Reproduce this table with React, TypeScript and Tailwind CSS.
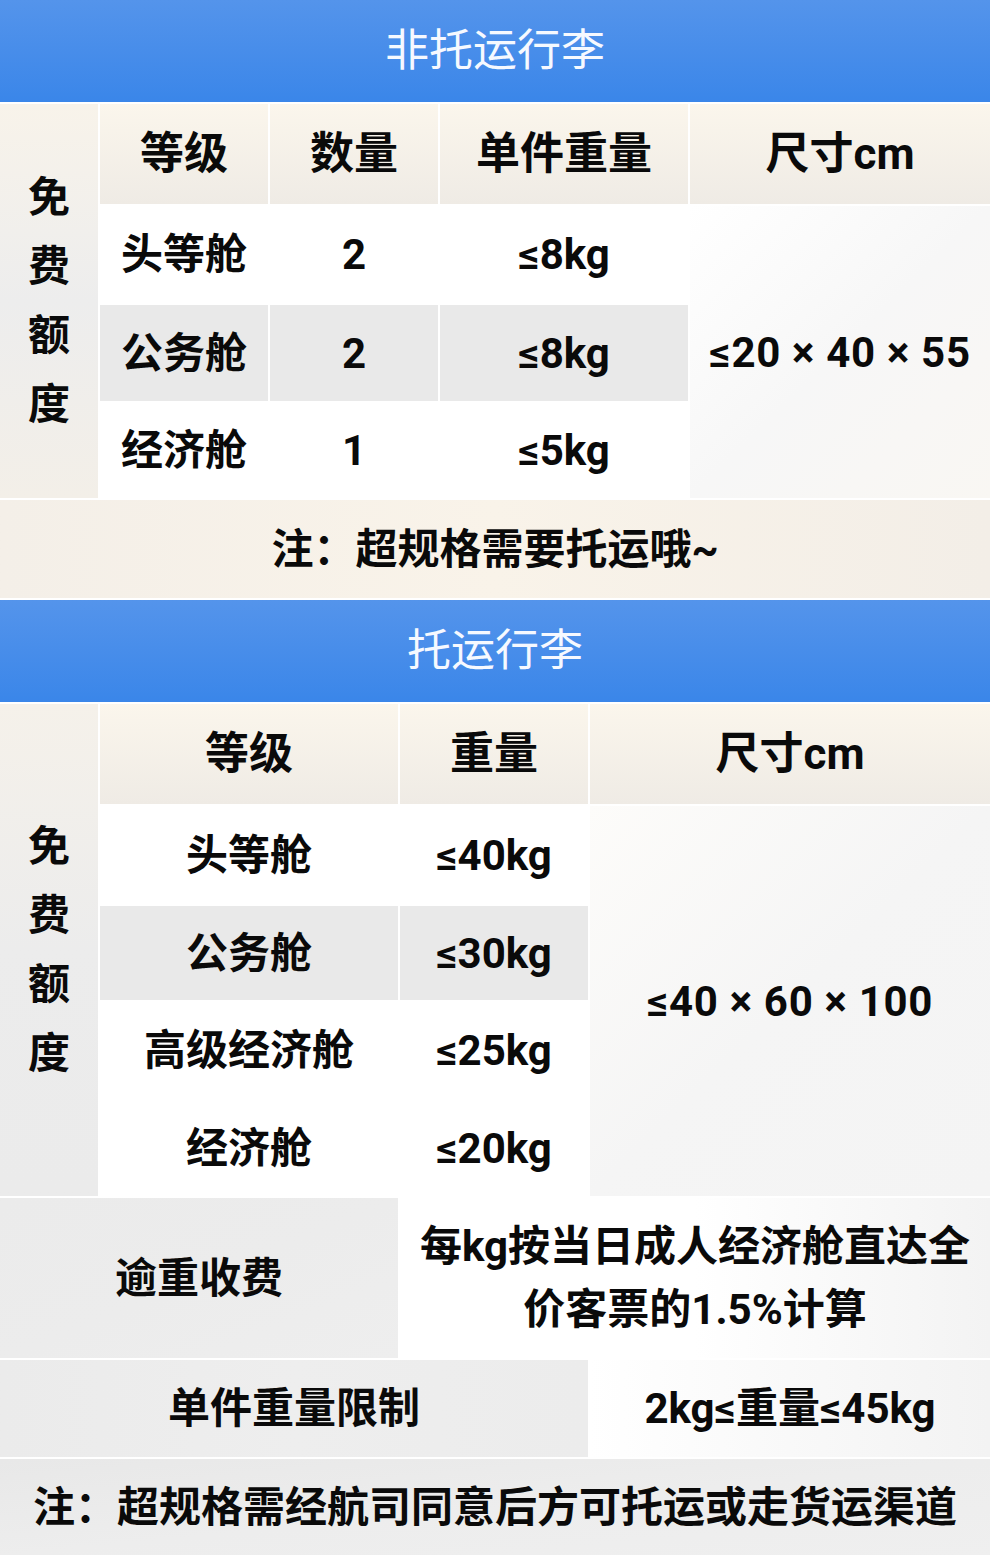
import React from "react";

const FONT = { fontFamily: 'Roboto, "Noto Sans CJK SC", "Noto Sans", sans-serif' };

function Banner({ title }: { title: string }) {
  return (
    <div className="h-[102px] flex items-center justify-center bg-gradient-to-b from-[#5494eb] to-[#3a86e9]">
      <span className="text-[44px] font-normal text-[#f6f9ff] tracking-[0px]">{title}</span>
    </div>
  );
}

function VText({ text }: { text: string }) {
  return (
    <div className="flex flex-col items-center justify-center">
      {text.split("").map((c, i) => (
        <span key={i} className="text-[42px] font-bold leading-[69px]">
          {c}
        </span>
      ))}
    </div>
  );
}

const cream = "bg-gradient-to-b from-[#fbf6ec] to-[#efebe5]";
const gray = "bg-[#e9e9e9]";
const white = "bg-white";

function Cell({ children, className = "", head = false }: { children?: React.ReactNode; className?: string; head?: boolean }) {
  return (
    <div className={`flex items-center justify-center text-center font-bold ${head ? "text-[44px]" : "text-[42px]"} ${className}`}>
      {children}
    </div>
  );
}

export default function App() {
  return (
    <div style={FONT} className="w-[990px] h-[1555px] bg-white flex flex-col gap-[2px] text-[#0a0a0a] overflow-hidden">
      <Banner title="非托运行李" />
      <div className="grid grid-cols-[98px_168px_168px_248px_300px] grid-rows-[100px_97px_96px_95px] gap-[2px]">
        <div className="row-span-4 flex items-center justify-center bg-gradient-to-b from-[#f8f3ea] via-[#ededed] to-[#f3efe8]">
          <VText text="免费额度" />
        </div>
        <Cell head className={cream}>等级</Cell>
        <Cell head className={cream}>数量</Cell>
        <Cell head className={cream}>单件重量</Cell>
        <Cell head className={cream}>尺寸cm</Cell>

        <Cell className={white}>头等舱</Cell>
        <Cell className={white}>2</Cell>
        <Cell className={white}>≤8kg</Cell>
        <Cell className="row-span-3 tracking-[0.7px] bg-gradient-to-br from-white via-[#f7f7f7] to-[#f9f7f3]">≤20 × 40 × 55</Cell>

        <Cell className={gray}>公务舱</Cell>
        <Cell className={gray}>2</Cell>
        <Cell className={gray}>≤8kg</Cell>

        <Cell className={white}>经济舱</Cell>
        <Cell className={white}>1</Cell>
        <Cell className={white}>≤5kg</Cell>
      </div>
      <Cell className="h-[98px] bg-gradient-to-r from-[#f4efe8] via-[#f9f3e9] to-[#f3eee7]">注：超规格需要托运哦~</Cell>

      <Banner title="托运行李" />
      <div className="grid grid-cols-[98px_298px_188px_400px] grid-rows-[100px_98px_94px_96px_96px_160px_97px] gap-[2px]">
        <div className="row-span-5 flex items-center justify-center bg-gradient-to-b from-[#f5f1ea] via-[#ececec] to-[#ebebeb]">
          <VText text="免费额度" />
        </div>
        <Cell head className={cream}>等级</Cell>
        <Cell head className={cream}>重量</Cell>
        <Cell head className={cream}>尺寸cm</Cell>

        <Cell className={white}>头等舱</Cell>
        <Cell className={white}>≤40kg</Cell>
        <Cell className="row-span-4 tracking-[0.7px] bg-gradient-to-br from-[#fdfcfa] via-[#f5f5f5] to-[#f4f4f4]">≤40 × 60 × 100</Cell>

        <Cell className={gray}>公务舱</Cell>
        <Cell className={gray}>≤30kg</Cell>

        <Cell className={white}>高级经济舱</Cell>
        <Cell className={white}>≤25kg</Cell>

        <Cell className={white}>经济舱</Cell>
        <Cell className={white}>≤20kg</Cell>

        <Cell className="col-span-2 bg-gradient-to-br from-[#ebebeb] via-[#ececec] to-[#eeeeee]">逾重收费</Cell>
        <Cell className="col-span-2 leading-[63px] bg-gradient-to-r from-white via-white to-[#f3f3f3]">
          <span>
            每kg按当日成人经济舱直达全
            <br />
            价客票的1.5%计算
          </span>
        </Cell>

        <Cell className="col-span-3 bg-gradient-to-r from-[#ebebeb] via-[#eeeeee] to-[#ececec]">单件重量限制</Cell>
        <Cell className="bg-gradient-to-r from-white to-[#f3f3f3]">2kg≤重量≤45kg</Cell>
      </div>
      <Cell className="h-[96px] bg-gradient-to-br from-[#e8e8e8] via-[#ededed] to-[#efefef]">注：超规格需经航司同意后方可托运或走货运渠道</Cell>
    </div>
  );
}
